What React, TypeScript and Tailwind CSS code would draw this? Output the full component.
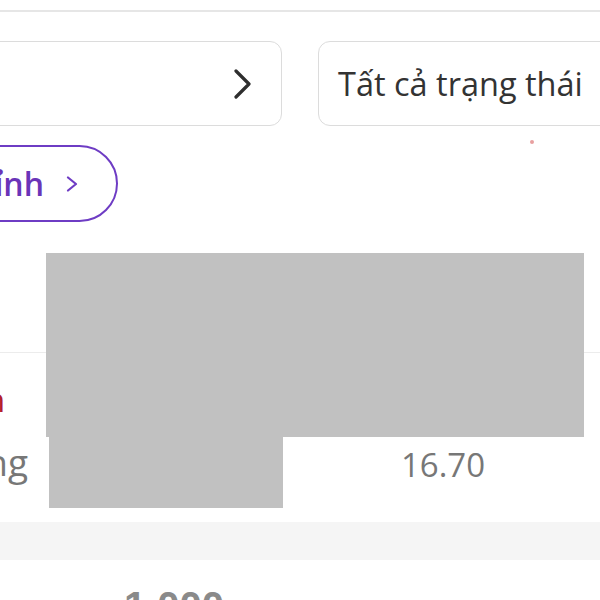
import React from "react";

/**
 * Bộ lọc đơn hàng + bảng số liệu (màn hình bị cắt)
 */
export default function App() {
  return (
    <main className="relative h-[600px] w-[600px] overflow-hidden bg-white font-['Open_Sans','Noto_Sans',sans-serif]">
      <div className="h-[10px]" />
      <div className="h-[2px] w-full bg-[#e6e6e6]" />

      {/* hàng bộ lọc */}
      <div className="mt-[29px] flex gap-[36px]">
        <div className="-ml-[20px] flex h-[85px] w-[302px] shrink-0 items-center justify-end rounded-[12px] border border-[#dcdcdc] pr-[29px]">
          <svg width="18" height="30" viewBox="0 0 18 30" fill="none">
            <path d="M2 2 L15 15 L2 28" stroke="#2e2e2e" strokeWidth="3.2" strokeLinecap="round" strokeLinejoin="round" />
          </svg>
        </div>
        <div className="flex h-[85px] w-[320px] shrink-0 items-center rounded-[12px] border border-[#dcdcdc] pl-[19px] pt-[2px]">
          <span className="whitespace-nowrap text-[32.5px] leading-none text-[#333]">Tất cả trạng thái</span>
        </div>
      </div>

      {/* nút tùy chỉnh */}
      <div className="mt-[19px] flex w-[118px] justify-end">
        <div className="flex h-[77px] shrink-0 items-center gap-[22px] rounded-full border-2 border-[#6e3cc4] pl-[30px] pr-[38px]">
          <span className="whitespace-nowrap text-[32px] font-semibold leading-none text-[#6a34b8]">Tùy chỉnh</span>
          <svg width="12" height="16" viewBox="0 0 12 16" fill="none">
            <path d="M2 1.5 L10 8 L2 14.5" stroke="#6e3cc4" strokeWidth="2.2" strokeLinecap="round" strokeLinejoin="round" />
          </svg>
        </div>
      </div>

      {/* bảng */}
      <div className="mt-[30px] h-[100px]" />
      <div className="h-px w-full bg-[#ececec]" />
      <div className="flex h-[169px]">
        <div className="flex w-[300px] flex-col">
          <div className="mt-[31px] flex w-[5px] justify-end">
            <span className="shrink-0 whitespace-nowrap text-[32px] leading-none text-[#b2202b]">Tên</span>
          </div>
          <div className="mt-[27px] flex w-[28px] justify-end">
            <span className="shrink-0 whitespace-nowrap text-[37px] leading-none text-[#777]">Tổng</span>
          </div>
        </div>
        <div className="flex flex-1 justify-center pr-[14px]">
          <span className="mt-[95px] text-[33px] leading-none text-[#777]">16.70</span>
        </div>
      </div>
      <div className="h-[38px] w-full bg-[#f5f5f5]" />
      <div className="flex pl-[124px] pt-[26px]">
        <span className="font-['Liberation_Sans',sans-serif] text-[40px] font-bold leading-none text-[#8a8a8a]">1,000</span>
      </div>

      {/* vùng bị che */}
      <div className="absolute left-[46px] top-[253px] h-[184px] w-[538px] bg-[#c1c1c1]" />
      <div className="absolute left-[49px] top-[437px] h-[71px] w-[234px] bg-[#c1c1c1]" />
      <div className="absolute left-[530px] top-[140px] h-[4px] w-[4px] rounded-full bg-[#e8a0a0]" />
    </main>
  );
}
